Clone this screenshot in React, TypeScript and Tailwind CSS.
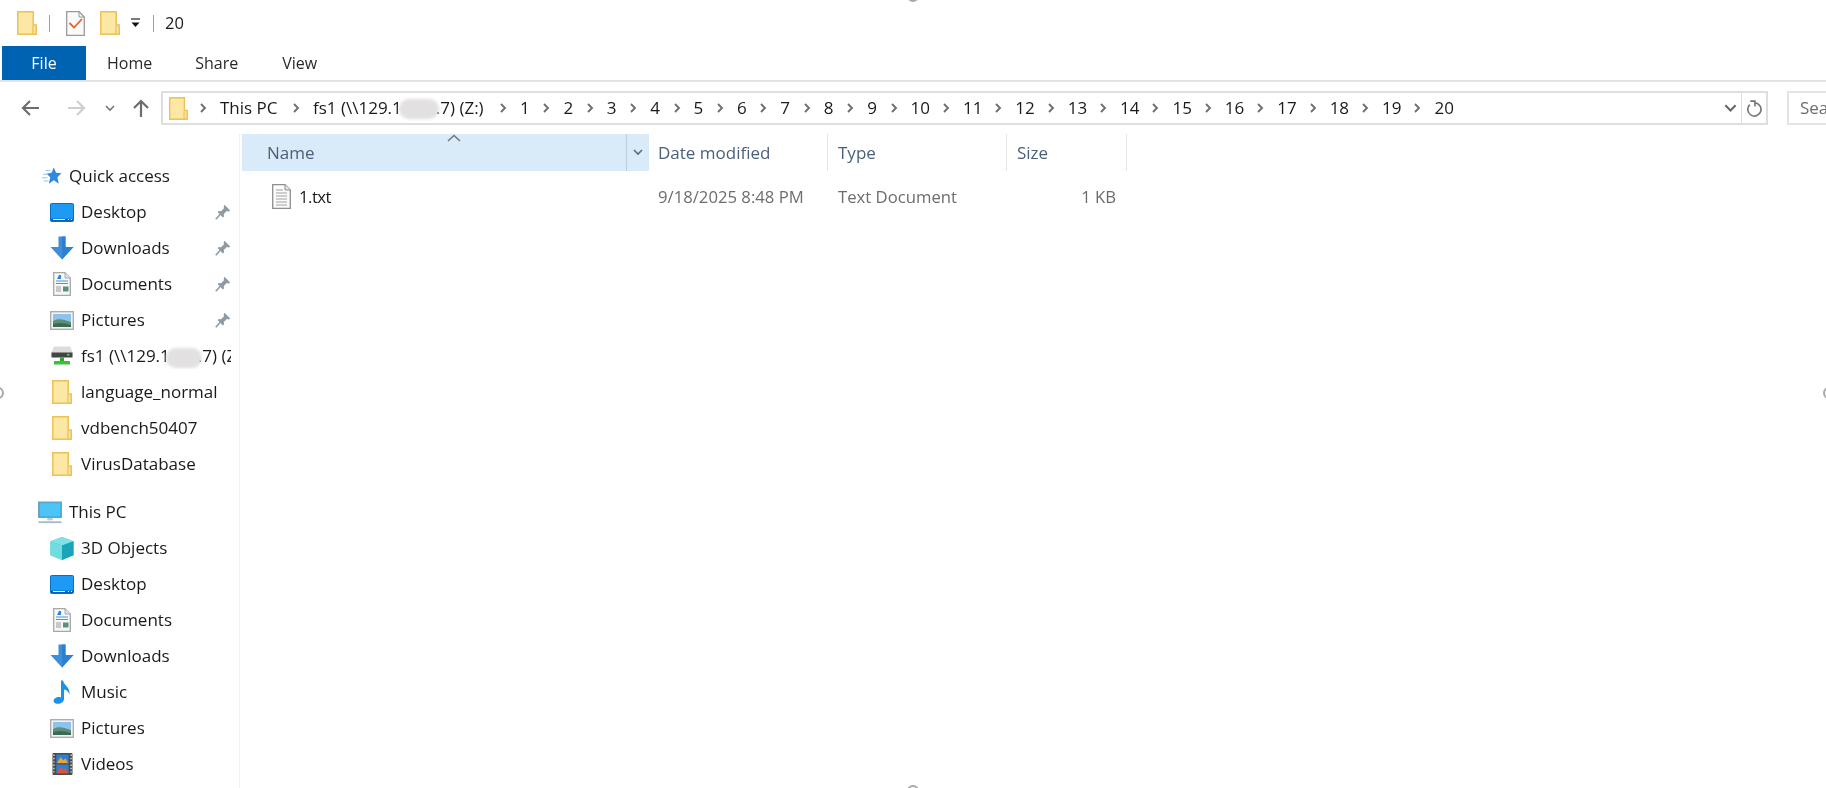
import React from "react";

const font = "[font-family:'Open_Sans','Noto_Sans',sans-serif]";

function Folder({ className = "w-[20px] h-[24px]" }: { className?: string }) {
  return (
    <svg viewBox="0 0 20 24" className={className}>
      <path d="M0.7 0.7H16.3V14H19.3V23.3H0.7Z" fill="#fbe08f" stroke="#ecc35a" strokeWidth="1.4" />
      <path d="M2 2H15V14.5H16V22H2Z" fill="#fce8a4" />
      <path d="M15.8 14.5V23" stroke="#ecc35a" strokeWidth="1.2" fill="none" />
    </svg>
  );
}

function CheckDoc() {
  return (
    <svg viewBox="0 0 19 25" className="w-[19px] h-[25px]">
      <path d="M0.7 0.7H13L18.3 6V24.3H0.7Z" fill="#fafafa" stroke="#9a9a9a" strokeWidth="1.3" />
      <path d="M13 0.7V6H18.3" fill="none" stroke="#9a9a9a" strokeWidth="1" />
      <path d="M3.5 12L8 16.5L16 8" fill="none" stroke="#e8622a" strokeWidth="1.8" />
    </svg>
  );
}

function DropMark() {
  return (
    <svg viewBox="0 0 11 10" className="w-[11px] h-[10px]">
      <path d="M1 1H10" stroke="#333" strokeWidth="1.3" />
      <path d="M1.5 4.5H9.5L5.5 9Z" fill="#111" />
    </svg>
  );
}

function Chev() {
  return (
    <svg viewBox="0 0 8 10" className="w-[8px] h-[10px] shrink-0">
      <path d="M2 1L6 5L2 9" fill="none" stroke="#6f6f6f" strokeWidth="1.9" />
    </svg>
  );
}

function Arrow({ dir, color }: { dir: "left" | "right" | "up"; color: string }) {
  const d =
    dir === "left"
      ? "M18 9H2M9 2L2 9L9 16"
      : dir === "right"
        ? "M0 9H16M9 2L16 9L9 16"
        : "M9 18V2M2 9L9 2L16 9";
  return (
    <svg viewBox="0 0 18 18" className="w-[18px] h-[18px]">
      <path d={d} fill="none" stroke={color} strokeWidth="2.2" />
    </svg>
  );
}

function SmallDown({ color = "#777", className = "w-[10px] h-[7px]" }: { color?: string; className?: string }) {
  return (
    <svg viewBox="0 0 10 7" className={className}>
      <path d="M1 1L5 5L9 1" fill="none" stroke={color} strokeWidth="1.6" />
    </svg>
  );
}

function Pin() {
  return (
    <svg viewBox="0 0 16 16" className="w-[16px] h-[16px]">
      <path d="M9.5 0.8L15.2 6.5L13.6 7.4L11.8 7L8.8 10L9 12.5L7.8 13.4L2.8 8.2L3.6 7L6.1 7.2L9 4.2L8.7 2.4Z" fill="#8f9aa3" />
      <path d="M5 10.5L0.8 15.2" stroke="#8f9aa3" strokeWidth="1.6" />
    </svg>
  );
}

function Star() {
  return (
    <svg viewBox="0 0 22 20" className="w-[20px] h-[18px]">
      <path d="M13 0.5L15.5 6.5L21.5 7L17 11.3L18.5 18.5L13 14.8L7.5 18.5L9 11.3L5 7.6L10.5 6.5Z" fill="#2d8ae0" />
      <path d="M1 8H6M0 12H6M2 15.5H7M4 4H9" stroke="#8cc4f0" strokeWidth="1.1" />
    </svg>
  );
}

function Desktop() {
  return (
    <svg viewBox="0 0 24 19" className="w-[24px] h-[19px]">
      <rect x="0.5" y="0.5" width="23" height="18" rx="1" fill="#0f86e8" stroke="#0a6fc4" />
      <path d="M1 1H23V15H1Z" fill="#1d9bf4" />
      <rect x="1" y="16" width="22" height="2" fill="#0b63b0" />
      <path d="M3 16.5H15" stroke="#e8f4ff" strokeWidth="1" />
      <path d="M18 16.5H19M21 16.5H22" stroke="#ffffff" strokeWidth="1" />
    </svg>
  );
}

function Download() {
  return (
    <svg viewBox="0 0 24 24" className="w-[24px] h-[24px]">
      <path d="M8.5 0.5H15.5V11H23.5L12 23.5L0.5 11H8.5Z" fill="#3d8fdc" />
      <path d="M12 0.5H15.5V11H23.5L12 23.5Z" fill="#2f7fd0" />
    </svg>
  );
}

function Documents() {
  return (
    <svg viewBox="0 0 18 24" className="w-[18px] h-[24px]">
      <path d="M0.7 0.7H12L17.3 6V23.3H0.7Z" fill="#f7f7f7" stroke="#a8a8a8" strokeWidth="1.3" />
      <path d="M12 0.7V6H17.3" fill="#e4e4e4" stroke="#a8a8a8" strokeWidth="1" />
      <path d="M4 7L6 3H8L8 7Z" fill="#2f86d6" />
      <path d="M3 9H15M3 11.5H15" stroke="#3a9be0" strokeWidth="1.2" />
      <path d="M3 15H8M3 17H8M3 19H8" stroke="#9a9a9a" strokeWidth="1" />
      <rect x="10" y="14.5" width="5.5" height="5" fill="#5a8f7b" />
    </svg>
  );
}

function Pictures() {
  return (
    <svg viewBox="0 0 24 19" className="w-[24px] h-[19px]">
      <rect x="0.7" y="0.7" width="22.6" height="17.6" fill="#f2f2f2" stroke="#a9a9a9" strokeWidth="1.3" />
      <rect x="3" y="3" width="18" height="13" fill="#8cc3ec" />
      <path d="M3 10C8 7 13 8 21 11V16H3Z" fill="#5d8f76" />
      <path d="M3 13C9 11 15 12 21 14V16H3Z" fill="#3c6a58" />
    </svg>
  );
}

function Drive() {
  return (
    <svg viewBox="0 0 22 20" className="w-[22px] h-[20px]">
      <path d="M3 0.5H19L21.5 6V11H0.5V6Z" fill="#dcdcdc" />
      <rect x="0.5" y="6.5" width="21" height="5" fill="#444444" />
      <rect x="16" y="7.8" width="2.4" height="1.8" fill="#4ad04a" />
      <rect x="9" y="11.5" width="4" height="3.5" fill="#2fa82f" />
      <rect x="3" y="15" width="16" height="3.6" rx="0.6" fill="#3cc03c" />
    </svg>
  );
}

function Monitor() {
  return (
    <svg viewBox="0 0 26 24" className="w-[24px] h-[23px]">
      <rect x="0.7" y="0.7" width="24.6" height="16.6" fill="#36b4f2" stroke="#6e9ab5" strokeWidth="1.2" />
      <path d="M2 2H24V16H2Z" fill="#4cc4f7" />
      <rect x="10" y="18" width="6" height="2.5" fill="#c0ccd4" />
      <rect x="0.5" y="21.5" width="25" height="2" fill="#a8bac6" />
    </svg>
  );
}

function Cube() {
  return (
    <svg viewBox="0 0 25 25" className="w-[25px] h-[25px]">
      <path d="M12.5 0.5L24.5 5V19.5L12.5 24.5L0.5 19.5V5Z" fill="#2bc4cf" />
      <path d="M12.5 0.5L24.5 5L12.5 9.5L0.5 5Z" fill="#7fe3e6" />
      <path d="M0.5 5L12.5 9.5V24.5L0.5 19.5Z" fill="#6fdde0" />
      <path d="M12.5 9.5L24.5 5V19.5L12.5 24.5Z" fill="#1aa4b8" />
    </svg>
  );
}

function Music() {
  return (
    <svg viewBox="0 0 20 24" className="w-[20px] h-[24px]">
      <path d="M9 0.5H11C11.5 5 18.5 7 17.5 15C17.2 13 15.5 10 12 9.5V19C12 22 8.5 24 5 23.7C1.5 23.4 0.8 20.5 2.5 18.8C4.5 16.8 7.5 16.8 9 17.5Z" fill="#1b92e6" />
    </svg>
  );
}

function Videos() {
  return (
    <svg viewBox="0 0 22 24" className="w-[21px] h-[24px]">
      <rect x="0.5" y="0.5" width="21" height="23" rx="1" fill="#4a4a4a" />
      <rect x="4.5" y="2" width="13" height="9.5" fill="#2f7fd0" />
      <rect x="4.5" y="12.5" width="13" height="9.5" fill="#2f7fd0" />
      <path d="M5 11L9 5L12 8L14 6L17 11Z" fill="#e6a43a" />
      <path d="M5 21.5L9 15L12 18L14 16L17 21.5Z" fill="#d9563a" />
      <path d="M2 2V22M20 2V22" stroke="#d8d8d8" strokeWidth="1.5" strokeDasharray="1.5 2" />
    </svg>
  );
}

function TextFile() {
  return (
    <svg viewBox="0 0 19 25" className="w-[19px] h-[25px]">
      <path d="M0.7 0.7H13L18.3 6V24.3H0.7Z" fill="#fbfbfb" stroke="#8f8f8f" strokeWidth="1.3" />
      <path d="M13 0.7V6H18.3" fill="#e8e8e8" stroke="#8f8f8f" strokeWidth="1" />
      <path d="M4 6H11M4 9H15M4 12H15M4 15H15M4 18H15M4 21H15" stroke="#a0a0a0" strokeWidth="1" />
    </svg>
  );
}

function Refresh() {
  return (
    <svg viewBox="0 0 18 18" className="w-[17px] h-[17px]">
      <path d="M4 5A7 7 0 1 0 9 3" fill="none" stroke="#777" strokeWidth="1.8" />
      <path d="M4.5 1.2H9.5V7" fill="none" stroke="#777" strokeWidth="1.7" />
    </svg>
  );
}

function Blob({ className }: { className: string }) {
  return <span className={`inline-block rounded-full bg-[#e2e0e0] blur-[1.5px] align-middle ${className}`} />;
}

function EdgeMark({ className }: { className: string }) {
  return <span className={`absolute h-[12px] w-[12px] rounded-full border-2 border-[#a8a8a8] ${className}`} />;
}

const crumbs: { label: React.ReactNode; w: number }[] = [
  { label: "This PC", w: 93 },
  {
    label: (
      <>
        fs1 (\\129.1
        <Blob className="w-[40px] h-[20px] -mx-[3px]" />
        .7) (Z:)
      </>
    ),
    w: 207,
  },
  ...["1", "2", "3", "4", "5", "6", "7", "8", "9"].map((n) => ({ label: n, w: 43.4 })),
  ...["10", "11", "12", "13", "14", "15", "16", "17", "18", "19", "20"].map((n) => ({ label: n, w: 52.4 })),
];

function Row({
  icon,
  label,
  pin,
  indent = true,
}: {
  icon: React.ReactNode;
  label: React.ReactNode;
  pin?: boolean;
  indent?: boolean;
}) {
  return (
    <div className={`flex h-[36px] items-center ${indent ? "pl-[50px]" : "pl-[37px]"}`}>
      <span className={`flex shrink-0 items-center ${indent ? "w-[24px] mr-[7px] justify-center" : "w-[25px] mr-[7px] justify-end"}`}>
        {icon}
      </span>
      <span className="mr-[8px] min-w-0 flex-1 overflow-hidden whitespace-nowrap text-[#1a1a1a]">{label}</span>
      {pin && (
        <span className="mr-[8px] shrink-0">
          <Pin />
        </span>
      )}
    </div>
  );
}

export default function App() {
  return (
    <div className={`${font} relative flex h-[788px] w-[1826px] flex-col overflow-hidden bg-white text-[17px] text-[#1a1a1a] blur-[0.4px]`}>
      {/* Quick access toolbar and title */}
      <div className="flex h-[46px] items-center pl-[17px]">
        <Folder />
        <span className="ml-[12px] h-[17px] w-px bg-[#a0a0a0]" />
        <span className="ml-[16px] flex"><CheckDoc /></span>
        <span className="ml-[15px] flex"><Folder /></span>
        <span className="ml-[10px] flex"><DropMark /></span>
        <span className="ml-[12px] h-[17px] w-px bg-[#a0a0a0]" />
        <span className="ml-[11px] text-[16.5px]">20</span>
      </div>

      {/* Ribbon tabs */}
      <div className="flex h-[36px] items-stretch border-b-2 border-[#e3e3e3] pl-[2px] text-[16px]">
        <div className="flex w-[84px] items-center justify-center bg-[#0063b1] text-white">File</div>
        <div className="flex items-center pl-[21px] text-[#2a2a2a]">Home</div>
        <div className="flex items-center pl-[43px] text-[#2a2a2a]">Share</div>
        <div className="flex items-center pl-[44px] text-[#2a2a2a]">View</div>
      </div>

      {/* Navigation row */}
      <div className="mt-[9px] flex h-[34px] items-center">
        <div className="flex w-[161px] shrink-0 items-center pl-[21px]">
          <Arrow dir="left" color="#6d6d6d" />
          <span className="ml-[29px] flex"><Arrow dir="right" color="#cfcfcf" /></span>
          <span className="ml-[19px] flex"><SmallDown /></span>
          <span className="ml-[17px] flex"><Arrow dir="up" color="#6d6d6d" /></span>
        </div>
        <div className="flex h-[34px] w-[1607px] shrink-0 items-center border-2 border-[#dedede] pl-[6px]">
          <Folder className="h-[23px] w-[19px] shrink-0" />
          <div className="ml-[11px] flex items-center whitespace-nowrap pb-[1px]">
            {crumbs.map((c, i) => (
              <div key={i} className="flex items-center" style={{ width: c.w }}>
                <Chev />
                <span className="ml-[13px] text-[#1a1a1a]">{c.label}</span>
              </div>
            ))}
          </div>
          <div className="ml-auto flex h-full items-center">
            <span className="mr-[4px] flex"><SmallDown color="#666" className="w-[13px] h-[9px]" /></span>
            <div className="flex h-full w-[25px] items-center justify-center border-l border-[#dedede]">
              <Refresh />
            </div>
          </div>
        </div>
        <div className="ml-[19px] flex h-[34px] flex-1 items-center border-2 border-r-0 border-[#e3e3e3] pl-[11px] text-[#6d6d6d]">
          Sea
        </div>
      </div>

      {/* Main area */}
      <div className="mt-[9px] flex min-h-0 flex-1">
        <nav className="w-[240px] shrink-0 border-r border-[#f0f0f0] pt-[24px]">
          <Row indent={false} icon={<Star />} label="Quick access" />
          <Row icon={<Desktop />} label="Desktop" pin />
          <Row icon={<Download />} label="Downloads" pin />
          <Row icon={<Documents />} label="Documents" pin />
          <Row icon={<Pictures />} label="Pictures" pin />
          <Row
            icon={<Drive />}
            label={
              <>
                fs1 (\\129.1
                <Blob className="w-[36px] h-[20px] -mx-[4px]" />
                .7) (Z:)
              </>
            }
          />
          <Row icon={<Folder />} label="language_normal" />
          <Row icon={<Folder />} label="vdbench50407" />
          <Row icon={<Folder />} label="VirusDatabase" />
          <div className="h-[12px]" />
          <Row indent={false} icon={<Monitor />} label="This PC" />
          <Row icon={<Cube />} label="3D Objects" />
          <Row icon={<Desktop />} label="Desktop" />
          <Row icon={<Documents />} label="Documents" />
          <Row icon={<Download />} label="Downloads" />
          <Row icon={<Music />} label="Music" />
          <Row icon={<Pictures />} label="Pictures" />
          <Row icon={<Videos />} label="Videos" />
        </nav>

        <main className="min-w-0 flex-1">
          <div className="ml-[2px] flex h-[37px] items-stretch text-[#4c607a]">
            <div className="relative flex w-[407px] items-center bg-[#d9ebf9]">
              <span className="pl-[25px]">Name</span>
              <svg viewBox="0 0 14 8" className="absolute left-[205px] top-[0px] h-[8px] w-[14px]">
                <path d="M1 7L7 1.5L13 7" fill="none" stroke="#777" strokeWidth="1.6" />
              </svg>
              <div className="ml-auto flex h-full w-[23px] items-center justify-center border-l border-[#b9cfdf]">
                <SmallDown color="#5a6b78" />
              </div>
            </div>
            <div className="flex w-[179px] items-center border-r border-[#e5e5e5] pl-[9px]">Date modified</div>
            <div className="flex w-[179px] items-center border-r border-[#e5e5e5] pl-[10px]">Type</div>
            <div className="flex w-[120px] items-center border-r border-[#e5e5e5] pl-[10px]">Size</div>
          </div>
          <div className="ml-[2px] mt-[8px] flex h-[36px] items-center text-[16.7px] text-[#6d6d6d]">
            <div className="flex w-[407px] items-center pl-[30px] text-[#1a1a1a]">
              <TextFile />
              <span className="ml-[8px] tracking-[-0.5px]">1.txt</span>
            </div>
            <div className="w-[179px] pl-[9px]">9/18/2025 8:48 PM</div>
            <div className="w-[179px] pl-[10px]">Text Document</div>
            <div className="w-[109px] text-right">1 KB</div>
          </div>
        </main>
      </div>

      {/* Window resize handles at the screenshot edges */}
      <EdgeMark className="-left-[8px] top-[387px]" />
      <EdgeMark className="-right-[9px] top-[387px]" />
      <EdgeMark className="left-[907px] -top-[10px]" />
      <EdgeMark className="left-[907px] -bottom-[9px]" />
    </div>
  );
}
